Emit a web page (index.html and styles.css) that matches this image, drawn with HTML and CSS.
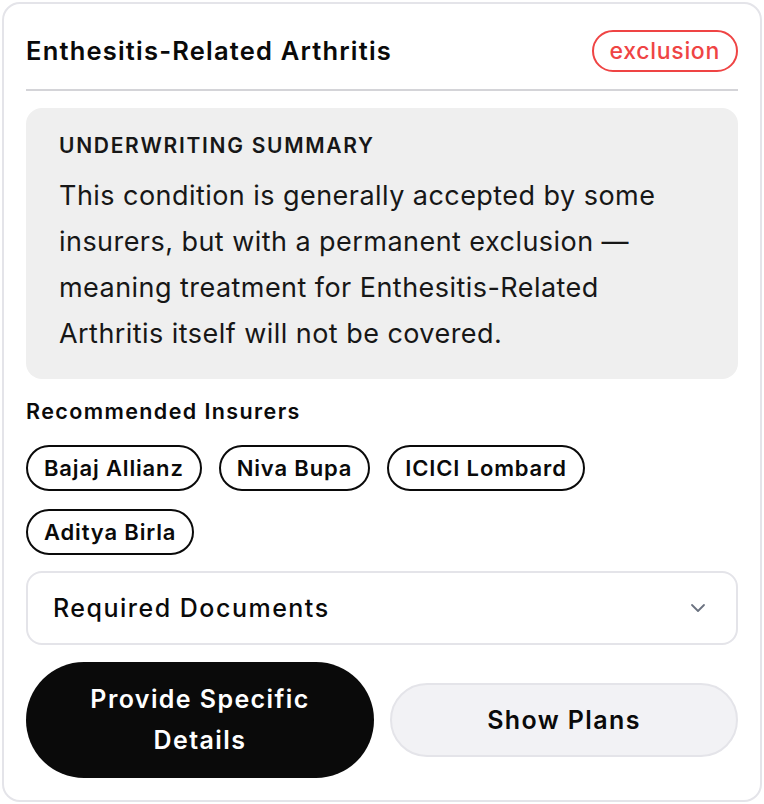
FILE: index.html
```html
<!DOCTYPE html>
<html>
<head>
<meta charset="utf-8">
<link rel="stylesheet" href="styles.css">
</head>
<body>
<div class="card">
  <div class="header">
    <h1 class="title">Enthesitis-Related Arthritis</h1>
    <span class="badge">exclusion</span>
  </div>
  <div class="summary">
    <div class="summary-label">UNDERWRITING SUMMARY</div>
    <p class="summary-text">This condition is generally accepted by some insurers, but with a permanent exclusion — meaning treatment for Enthesitis-Related Arthritis itself will not be covered.</p>
  </div>
  <div class="insurers">
    <div class="insurers-label">Recommended Insurers</div>
    <div class="chips">
      <span class="chip">Bajaj Allianz</span>
      <span class="chip">Niva Bupa</span>
      <span class="chip">ICICI Lombard</span>
      <span class="chip">Aditya Birla</span>
    </div>
  </div>
  <div class="docs">
    <span class="docs-label">Required Documents</span>
    <svg class="chev" width="16" height="10" viewBox="0 0 16 10"><path d="M2 2 L8 8 L14 2" fill="none" stroke="#6b7280" stroke-width="1.8" stroke-linecap="round" stroke-linejoin="round"/></svg>
  </div>
  <div class="actions">
    <button class="btn btn-primary">Provide Specific Details</button>
    <button class="btn btn-secondary">Show Plans</button>
  </div>
</div>
</body>
</html>
```
FILE: styles.css
```css
* { box-sizing: border-box; }
html, body { margin: 0; padding: 0; background: #ffffff; }
body {
  font-family: Inter, "Noto Sans", "Liberation Sans", sans-serif;
  color: #0a0a0a;
}
.card {
  margin: 2px;
  width: 760px;
  height: 800px;
  border: 2px solid #e4e4e9;
  border-radius: 18px;
  padding: 26px 22px 22px 22px;
  display: flex;
  flex-direction: column;
}
.header {
  display: flex;
  justify-content: space-between;
  align-items: center;
  padding-bottom: 17px;
  border-bottom: 2px solid #d4d4d8;
}
.title { margin: 0; font-size: 25.5px; font-weight: 600; line-height: 42px; letter-spacing: 1.2px; }
.badge {
  height: 42px;
  border: 2px solid #ef4444;
  color: #ef4444;
  border-radius: 999px;
  padding: 0 16px;
  font-size: 23px;
  font-weight: 500;
  letter-spacing: 0.7px;
  display: flex;
  align-items: center;
}
.summary {
  margin-top: 17px;
  background: #efefef;
  border-radius: 16px;
  padding: 24px 33px 22px 33px;
}
.summary-label { font-size: 21px; font-weight: 600; letter-spacing: 1.7px; line-height: 28px; margin-bottom: 13px; color: #171717; }
.summary-text { margin: 0; font-size: 27px; line-height: 46px; letter-spacing: 0.45px; color: #171717; }
.insurers { margin-top: 18px; }
.insurers-label { font-size: 21.5px; font-weight: 600; line-height: 28px; letter-spacing: 1.4px; }
.chips { margin-top: 20px; display: flex; flex-wrap: wrap; gap: 18px 17px; }
.chip {
  height: 46px;
  border: 2px solid #0a0a0a;
  border-radius: 999px;
  padding: 0 16px;
  font-size: 22px;
  font-weight: 600;
  letter-spacing: 0.85px;
  display: flex;
  align-items: center;
}
.docs {
  margin-top: 16px;
  height: 74px;
  border: 2px solid #e4e4e9;
  border-radius: 16px;
  padding: 0 30px 0 25px;
  display: flex;
  align-items: center;
  justify-content: space-between;
}
.docs-label { font-size: 25px; font-weight: 500; letter-spacing: 1.5px; }
.actions {
  margin-top: 17px;
  display: grid;
  grid-template-columns: 1fr 1fr;
  align-items: center;
  gap: 16px;
}
.btn {
  min-width: 0;
  font-family: inherit;
  font-size: 25px;
  font-weight: 600;
  letter-spacing: 1.4px;
  border-radius: 999px;
  cursor: pointer;
}
.btn-primary {
  background: #0a0a0a;
  color: #ffffff;
  border: none;
  height: 116px;
  line-height: 41px;
  padding: 0 50px;
}
.btn-secondary {
  background: #f2f2f5;
  color: #0a0a0a;
  border: 2px solid #e4e4e9;
  height: 74px;
}
```
